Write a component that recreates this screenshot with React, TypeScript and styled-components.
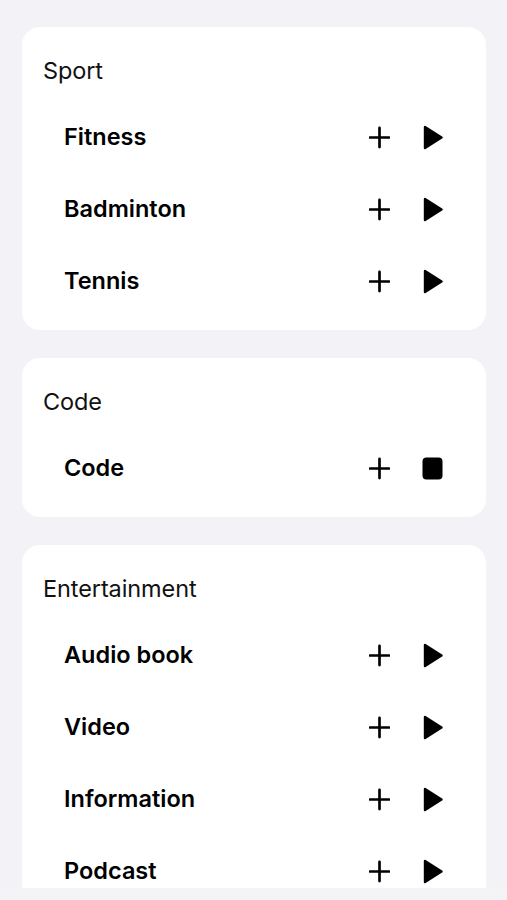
import React from "react";
import styled, { createGlobalStyle } from "styled-components";

const Global = createGlobalStyle`
  html, body { margin: 0; padding: 0; background: #f2f2f7; }
  body { font-family: Inter, "Noto Sans", "Liberation Sans", sans-serif; -webkit-font-smoothing: antialiased; }
`;

const Page = styled.div`
  display: flex;
  flex-direction: column;
  gap: 28px;
  padding: 27px 21px 40px 22px;
  box-sizing: border-box;
`;

const Card = styled.section`
  background: #ffffff;
  border-radius: 18px;
  padding: 30px 0 13px 0;
  display: flex;
  flex-direction: column;
`;

const Header = styled.h2`
  margin: 0 0 16px 0;
  padding-left: 21px;
  height: 28px;
  line-height: 28px;
  font-size: 23.5px;
  font-weight: 400;
  color: #111;
  letter-spacing: -0.1px;
`;

const Row = styled.div`
  height: 72px;
  display: flex;
  align-items: center;
  padding: 0 43px 0 42px;
`;

const Name = styled.span`
  flex: 1;
  font-size: 23.5px;
  font-weight: 600;
  line-height: 28px;
  margin-top: -1px;
  color: #000;
  letter-spacing: 0;
`;

const Actions = styled.div`
  display: flex;
  align-items: center;
  gap: 32px;
`;

const IconBtn = styled.span`
  display: flex;
  align-items: center;
  justify-content: center;
  width: 21px;
  height: 24px;
`;

const BottomBar = styled.div`
  position: fixed;
  left: 0;
  right: 0;
  bottom: 0;
  height: 12px;
  background: #f4f4f6;
`;

const Plus = () => (
  <svg width="22" height="23" viewBox="0 0 22 23">
    <path d="M11 1.5v20M1 11.5h20" stroke="#000" strokeWidth="2.8" strokeLinecap="round" fill="none" />
  </svg>
);

const Play = () => (
  <svg width="20" height="25" viewBox="0 0 20 25">
    <path d="M2 2 L18.5 12.5 L2 23 Z" fill="#000" stroke="#000" strokeWidth="2.4" strokeLinejoin="round" />
  </svg>
);

const Stop = () => (
  <svg width="21" height="23" viewBox="0 0 21 23">
    <rect x="0.5" y="0.5" width="20" height="22" rx="4" fill="#000" />
  </svg>
);

type Item = { name: string; playing?: boolean };
type Group = { title: string; items: Item[] };

const groups: Group[] = [
  { title: "Sport", items: [{ name: "Fitness" }, { name: "Badminton" }, { name: "Tennis" }] },
  { title: "Code", items: [{ name: "Code", playing: true }] },
  {
    title: "Entertainment",
    items: [{ name: "Audio book" }, { name: "Video" }, { name: "Information" }, { name: "Podcast" }],
  },
];

export default function App() {
  return (
    <>
      <Global />
      <Page>
        {groups.map((g) => (
          <Card key={g.title}>
            <Header>{g.title}</Header>
            {g.items.map((it) => (
              <Row key={it.name}>
                <Name>{it.name}</Name>
                <Actions>
                  <IconBtn>
                    <Plus />
                  </IconBtn>
                  <IconBtn>{it.playing ? <Stop /> : <Play />}</IconBtn>
                </Actions>
              </Row>
            ))}
          </Card>
        ))}
      </Page>
      <BottomBar />
    </>
  );
}
